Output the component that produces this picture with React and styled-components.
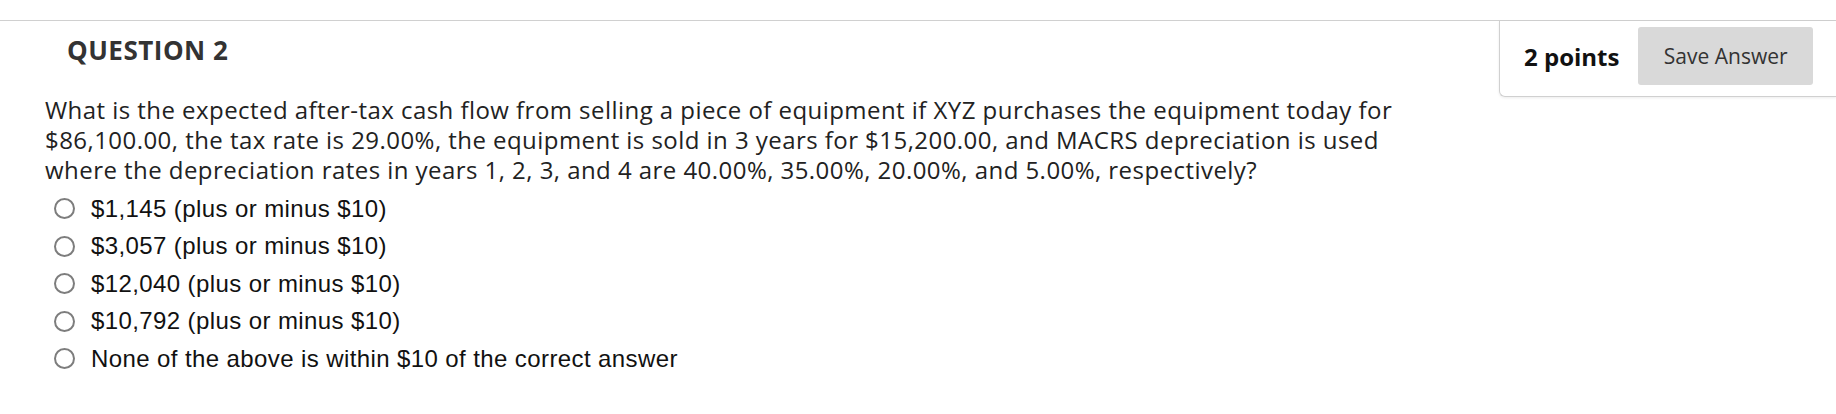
import React from 'react';
import styled, { createGlobalStyle } from 'styled-components';

const GlobalStyle = createGlobalStyle`
  html, body {
    margin: 0;
    padding: 0;
    background: #fff;
  }
  body {
    font-family: "Open Sans", "Liberation Sans", Arial, sans-serif;
  }
`;

const Page = styled.div`
  width: 1836px;
  padding-top: 20px;
`;

const Header = styled.div`
  display: flex;
  justify-content: space-between;
  align-items: flex-start;
  border-top: 1px solid #d0d0d0;
`;

const Title = styled.h2`
  margin: 11px 0 0 67px;
  font-size: 26px;
  font-weight: 700;
  letter-spacing: 0.5px;
  color: #333;
`;

const PointsPanel = styled.div`
  display: flex;
  align-items: center;
  gap: 19px;
  width: 337px;
  box-sizing: border-box;
  padding: 6px 23px 11px 24px;
  border-left: 1px solid #d0d0d0;
  border-bottom: 1px solid #d0d0d0;
  border-bottom-left-radius: 6px;
  box-shadow: 0 1px 3px rgba(0, 0, 0, 0.08);
`;

const Points = styled.span`
  font-size: 24px;
  font-weight: 700;
  color: #111;
  white-space: nowrap;
`;

const SaveButton = styled.button`
  width: 177px;
  height: 58px;
  border: none;
  border-radius: 3px;
  background: #d9d9d9;
  color: #333;
  font-family: "Open Sans", sans-serif;
  font-size: 21px;
  cursor: pointer;
`;

const QuestionText = styled.p`
  margin: -2px 0 0 45px;
  font-size: 24px;
  line-height: 30px;
  letter-spacing: 0.45px;
  color: #222;
  white-space: nowrap;
`;

const Answers = styled.ul`
  list-style: none;
  margin: 5px 0 0;
  padding: 0 0 0 54px;
`;

const Answer = styled.li`
  display: flex;
  align-items: center;
  gap: 16px;
  height: 37.5px;
  font-family: "Liberation Sans", Arial, sans-serif;
  font-size: 24px;
  letter-spacing: 0.4px;
  color: #111;
`;

const Radio = styled.span`
  width: 21px;
  height: 21px;
  box-sizing: border-box;
  border: 2px solid #7d7d7d;
  border-radius: 50%;
  flex-shrink: 0;
`;

const answers = [
  '$1,145 (plus or minus $10)',
  '$3,057 (plus or minus $10)',
  '$12,040 (plus or minus $10)',
  '$10,792 (plus or minus $10)',
  'None of the above is within $10 of the correct answer',
];

const App = () => {
  return (
    <Page>
      <GlobalStyle />
      <Header>
        <Title>QUESTION 2</Title>
        <PointsPanel>
          <Points>2 points</Points>
          <SaveButton>Save Answer</SaveButton>
        </PointsPanel>
      </Header>
      <QuestionText>
        What is the expected after-tax cash flow from selling a piece of equipment if XYZ purchases the equipment today for
        <br />
        $86,100.00, the tax rate is 29.00%, the equipment is sold in 3 years for $15,200.00, and MACRS depreciation is used
        <br />
        where the depreciation rates in years 1, 2, 3, and 4 are 40.00%, 35.00%, 20.00%, and 5.00%, respectively?
      </QuestionText>
      <Answers>
        {answers.map((a) => (
          <Answer key={a}>
            <Radio />
            {a}
          </Answer>
        ))}
      </Answers>
    </Page>
  );
};

export default App;
